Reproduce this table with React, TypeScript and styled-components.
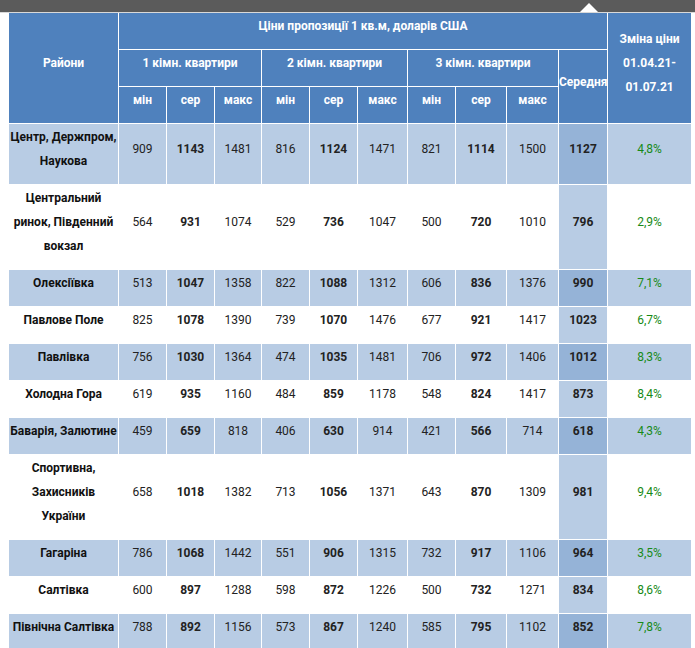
import React from "react";
import styled, { createGlobalStyle } from "styled-components";

const GlobalStyle = createGlobalStyle`
  html, body {
    margin: 0;
    padding: 0;
    overflow: hidden;
    background: #ffffff;
  }
  body {
    font-family: Roboto, "Noto Sans", "Liberation Sans", sans-serif;
  }
  *, *::before, *::after {
    box-sizing: border-box;
  }
`;

const Page = styled.div`
  width: 695px;
`;

const TopBar = styled.div`
  position: relative;
  height: 13px;
  background: #5b5b5b;
  border-bottom: 1px solid #d9d9d9;
`;

const Arrow = styled.span`
  position: absolute;
  left: 580px;
  bottom: 0;
  width: 0;
  height: 0;
  border-left: 9px solid transparent;
  border-right: 9px solid transparent;
  border-bottom: 9px solid #ffffff;
`;

const TableWrap = styled.div`
  padding-left: 9px;
`;

const Table = styled.table`
  width: 683px;
  table-layout: fixed;
  border-collapse: separate;
  border-spacing: 0;
  font-size: 12px;
  line-height: 24px;
`;

const Col = styled.col<{ $w: number }>`
  width: ${(p) => p.$w}px;
`;

const HeadCell = styled.th`
  background: #4f81bd;
  color: #ffffff;
  font-weight: 700;
  text-align: center;
  vertical-align: middle;
  padding: 1px 1px 11px;
  border-right: 1px solid #ffffff;
  border-bottom: 1px solid #ffffff;
  white-space: normal;
`;

const AvgHead = styled(HeadCell)`
  padding-left: 0;
  padding-right: 0;
  white-space: nowrap;
`;

type Kind = "name" | "num" | "bold" | "avg" | "change";

const Cell = styled.td<{ $kind: Kind; $striped: boolean }>`
  background: ${(p) =>
    p.$kind === "avg"
      ? p.$striped
        ? "#95b3d7"
        : "#b8cce4"
      : p.$striped
      ? "#b8cce4"
      : "#ffffff"};
  color: ${(p) =>
    p.$kind === "change" ? "#178a17" : p.$kind === "name" ? "#111111" : "#222222"};
  font-weight: ${(p) => (p.$kind === "num" || p.$kind === "change" ? 400 : 700)};
  text-align: center;
  vertical-align: middle;
  padding: 1px 1px 11px;
  border-right: 1px solid #ffffff;
  border-bottom: 1px solid #ffffff;
`;

type Row = {
  name: string;
  values: number[];
  avg: number;
  change: string;
};

const rows: Row[] = [
  { name: "Центр, Держпром, Наукова", values: [909, 1143, 1481, 816, 1124, 1471, 821, 1114, 1500], avg: 1127, change: "4,8%" },
  { name: "Центральний ринок, Південний вокзал", values: [564, 931, 1074, 529, 736, 1047, 500, 720, 1010], avg: 796, change: "2,9%" },
  { name: "Олексіївка", values: [513, 1047, 1358, 822, 1088, 1312, 606, 836, 1376], avg: 990, change: "7,1%" },
  { name: "Павлове Поле", values: [825, 1078, 1390, 739, 1070, 1476, 677, 921, 1417], avg: 1023, change: "6,7%" },
  { name: "Павлівка", values: [756, 1030, 1364, 474, 1035, 1481, 706, 972, 1406], avg: 1012, change: "8,3%" },
  { name: "Холодна Гора", values: [619, 935, 1160, 484, 859, 1178, 548, 824, 1417], avg: 873, change: "8,4%" },
  { name: "Баварія, Залютине", values: [459, 659, 818, 406, 630, 914, 421, 566, 714], avg: 618, change: "4,3%" },
  { name: "Спортивна, Захисників України", values: [658, 1018, 1382, 713, 1056, 1371, 643, 870, 1309], avg: 981, change: "9,4%" },
  { name: "Гагаріна", values: [786, 1068, 1442, 551, 906, 1315, 732, 917, 1106], avg: 964, change: "3,5%" },
  { name: "Салтівка", values: [600, 897, 1288, 598, 872, 1226, 500, 732, 1271], avg: 834, change: "8,6%" },
  { name: "Північна Салтівка", values: [788, 892, 1156, 573, 867, 1240, 585, 795, 1102], avg: 852, change: "7,8%" },
];

const colWidths = [110, 48, 48, 47, 48, 48, 50, 48, 51, 52, 49, 84];
const groups = ["1 кімн. квартири", "2 кімн. квартири", "3 кімн. квартири"];
const subHeads = ["мін", "сер", "макс"];

export default function App() {
  return (
    <Page>
      <GlobalStyle />
      <TopBar>
        <Arrow />
      </TopBar>
      <TableWrap>
        <Table>
          <colgroup>
            {colWidths.map((w, i) => (
              <Col key={i} $w={w} />
            ))}
          </colgroup>
          <thead>
            <tr>
              <HeadCell rowSpan={3}>Райони</HeadCell>
              <HeadCell colSpan={10}>Ціни пропозиції 1 кв.м, доларів США</HeadCell>
              <HeadCell rowSpan={3}>Зміна ціни 01.04.21- 01.07.21</HeadCell>
            </tr>
            <tr>
              {groups.map((g) => (
                <HeadCell key={g} colSpan={3}>
                  {g}
                </HeadCell>
              ))}
              <AvgHead rowSpan={2}>Середня</AvgHead>
            </tr>
            <tr>
              {groups.map((g) =>
                subHeads.map((s) => <HeadCell key={g + s}>{s}</HeadCell>)
              )}
            </tr>
          </thead>
          <tbody>
            {rows.map((r, i) => {
              const striped = i % 2 === 0;
              return (
                <tr key={r.name}>
                  <Cell $kind="name" $striped={striped}>
                    {r.name}
                  </Cell>
                  {r.values.map((v, j) => (
                    <Cell key={j} $kind={j % 3 === 1 ? "bold" : "num"} $striped={striped}>
                      {v}
                    </Cell>
                  ))}
                  <Cell $kind="avg" $striped={striped}>
                    {r.avg}
                  </Cell>
                  <Cell $kind="change" $striped={striped}>
                    {r.change}
                  </Cell>
                </tr>
              );
            })}
          </tbody>
        </Table>
      </TableWrap>
    </Page>
  );
}
